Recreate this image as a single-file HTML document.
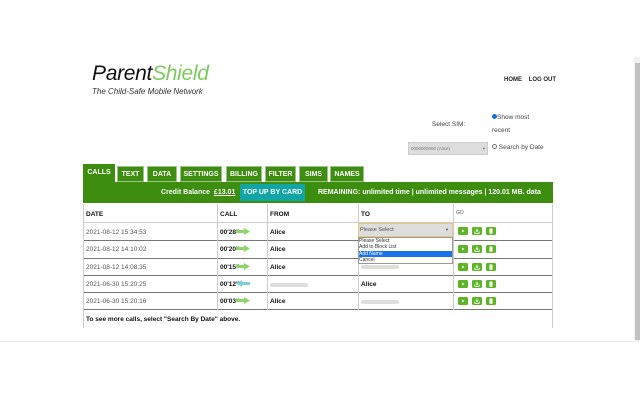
<!DOCTYPE html>
<html><head><meta charset="utf-8"><style>
*{margin:0;padding:0;box-sizing:border-box}
body{width:640px;height:400px;background:#fff;font-family:"Liberation Sans",sans-serif;position:relative;overflow:hidden;color:#222}
.a{position:absolute}
.tab{position:absolute;top:166px;height:16px;background:#3d8d0f;color:#fff;font-size:7px;font-weight:bold;text-align:center;line-height:15px;border:1px solid #9bc48a}
.bar{position:absolute;left:83px;top:182px;width:470px;height:21px;background:#3d8d0f}
.row{position:absolute;left:84px;width:468px;border-bottom:1px solid #777}
.vl{position:absolute;top:204px;height:124px;width:1px;background:#ccc}
.t{position:absolute;font-size:6.5px;color:#555}
.b{font-weight:bold;color:#111}
.btn{position:absolute;width:10px;height:8px;background:#5bb524;border-radius:1.5px}
.btn svg{position:absolute;left:2px;top:1px;width:6px;height:6px}
.arr{position:absolute;width:14px;height:7px}
.blur{position:absolute;height:4px;background:#ddd;border-radius:2px}
</style></head><body>
<div class="a" style="left:0;top:0;width:634px;height:342px;border-bottom:1px solid #eee"></div>
<div class="a" style="left:634px;top:57px;width:6px;height:285px;background:#f1f1f1"></div>
<div class="a" style="left:635px;top:63px;width:5px;height:277px;background:#c1c1c1"></div>
<div class="a" style="left:92px;top:62px;font-size:21px;font-style:italic;color:#111;letter-spacing:-0.3px">Parent<span style="color:#7ccc5c">Shield</span></div>
<div class="a" style="left:92px;top:87px;font-size:8px;font-style:italic;color:#333">The Child-Safe Mobile Network</div>
<div class="a" style="left:504px;top:77px;font-size:6px;font-weight:bold;color:#222">HOME &nbsp;&nbsp;&nbsp;LOG OUT</div>
<div class="a" style="left:432px;top:121px;font-size:6.5px;color:#444">Select SIM:</div>
<div class="a" style="left:492px;top:111px;font-size:6.5px;color:#444;line-height:13px;width:48px"><span style="display:inline-block;width:5px;height:5px;border-radius:50%;background:#1a6fe0"></span>Show most recent</div>
<div class="a" style="left:408px;top:142px;width:80px;height:13px;background:#ddd;border:1px solid #ccc;font-size:4.5px;color:#777;line-height:11px;padding-left:2px">0000000000 (Alice) <span style="float:right;margin-right:2px">▾</span></div>
<div class="a" style="left:492px;top:144px;font-size:6.5px;color:#444"><span style="display:inline-block;width:5px;height:5px;border-radius:50%;border:1px solid #777"></span> Search by Date</div>

<div class="tab" style="left:83px;width:32px;top:164px;height:20px;border:none;line-height:17px">CALLS</div>
<div class="tab" style="left:117px;width:27px">TEXT</div>
<div class="tab" style="left:147px;width:30px">DATA</div>
<div class="tab" style="left:180px;width:42px">SETTINGS</div>
<div class="tab" style="left:226px;width:36px">BILLING</div>
<div class="tab" style="left:265px;width:31px">FILTER</div>
<div class="tab" style="left:299px;width:29px">SIMS</div>
<div class="tab" style="left:330px;width:34px">NAMES</div>
<div class="bar"></div>
<div class="a" style="left:161px;top:189px;font-size:7px;font-weight:bold;color:#fff">Credit Balance &nbsp;<u>£13.01</u></div>
<div class="a" style="left:240px;top:184px;width:65px;height:17px;background:#12a5a5;color:#fff;font-size:7px;font-weight:bold;text-align:center;line-height:17px">TOP UP BY CARD</div>
<div class="a" style="left:318px;top:189px;font-size:7px;font-weight:bold;color:#fff">REMAINING: unlimited time | unlimited messages | 120.01 MB. data</div>

<div class="a" style="left:83px;top:204px;width:1px;height:124px;background:#ccc"></div>
<div class="a" style="left:552px;top:204px;width:1px;height:124px;background:#ccc"></div>
<div class="row" style="top:204px;height:19px;border-bottom-color:#ccc"></div>
<div class="row" style="top:223px;height:18px"></div>
<div class="row" style="top:241px;height:18px"></div>
<div class="row" style="top:259px;height:17px"></div>
<div class="row" style="top:276px;height:17px"></div>
<div class="row" style="top:293px;height:17px"></div>
<div class="vl" style="left:217px;height:106px"></div>
<div class="vl" style="left:267px;height:106px"></div>
<div class="vl" style="left:358px;height:106px"></div>
<div class="vl" style="left:453px;height:106px"></div>

<div class="t b" style="left:86px;top:211px">DATE</div>
<div class="t b" style="left:220px;top:211px">CALL</div>
<div class="t b" style="left:270px;top:211px">FROM</div>
<div class="t b" style="left:361px;top:211px">TO</div>
<div class="t" style="left:456px;top:210px;font-size:5px">GO</div>

<div class="t" style="left:86px;top:229px">2021-08-12 15:34:53</div>
<div class="t" style="left:86px;top:246px">2021-08-12 14:10:02</div>
<div class="t" style="left:86px;top:264px">2021-08-12 14:08:35</div>
<div class="t" style="left:86px;top:281px">2021-06-30 15:20:25</div>
<div class="t" style="left:86px;top:298px">2021-06-30 15:20:16</div>

<div class="t b" style="left:220px;top:229px">00'28"</div>
<div class="t b" style="left:220px;top:246px">00'20"</div>
<div class="t b" style="left:220px;top:264px">00'15"</div>
<div class="t b" style="left:220px;top:281px">00'12"</div>
<div class="t b" style="left:220px;top:298px">00'03"</div>
<svg class="arr" style="left:236px;top:228px" viewBox="0 0 14 7"><path d="M0 2h8V0l6 3.5L8 7V5H0z" fill="#8fd66a"/></svg>
<svg class="arr" style="left:236px;top:245px" viewBox="0 0 14 7"><path d="M0 2h8V0l6 3.5L8 7V5H0z" fill="#8fd66a"/></svg>
<svg class="arr" style="left:236px;top:263px" viewBox="0 0 14 7"><path d="M0 2h8V0l6 3.5L8 7V5H0z" fill="#8fd66a"/></svg>
<svg class="arr" style="left:236px;top:280px" viewBox="0 0 14 7"><path d="M14 2H6V0L0 3.5 6 7V5h8z" fill="#7ccfd6"/></svg>
<svg class="arr" style="left:236px;top:297px" viewBox="0 0 14 7"><path d="M0 2h8V0l6 3.5L8 7V5H0z" fill="#8fd66a"/></svg>

<div class="t b" style="left:270px;top:229px">Alice</div>
<div class="t b" style="left:270px;top:246px">Alice</div>
<div class="t b" style="left:270px;top:264px">Alice</div>
<div class="blur" style="left:270px;top:283px;width:38px"></div>
<div class="t b" style="left:270px;top:298px">Alice</div>

<div class="blur" style="left:361px;top:265px;width:38px"></div>
<div class="t b" style="left:361px;top:281px">Alice</div>
<div class="blur" style="left:361px;top:300px;width:38px"></div>

<div class="a" style="left:358px;top:223px;width:95px;height:14px;background:#ddd;border:1px solid #e8c97a;font-size:5.5px;color:#555;line-height:12px;padding-left:1px">Please Select<span style="float:right;margin-right:3px;font-size:4px">▼</span></div>
<div class="a" style="left:358px;top:237px;width:95px;height:27px;background:#fff;border:1px solid #999;font-size:5px;color:#333;line-height:6.4px">
<div>Please Select</div><div>Add to Block List</div><div style="background:#1a73e8;color:#fff">Add Name</div><div>Cancel</div></div>

<svg width="0" height="0" style="position:absolute"><defs>
<symbol id="p" viewBox="0 0 6 6"><path d="M2 1.5L4.5 3 2 4.5z" fill="#fff"/></symbol>
<symbol id="d" viewBox="0 0 6 6"><path d="M3 0.5v3M1.8 2.4L3 3.6 4.2 2.4M0.8 3.5v1.8h4.4V3.5" stroke="#fff" stroke-width="0.8" fill="none"/></symbol>
<symbol id="t" viewBox="0 0 6 6"><path d="M1.5 1h3M2.5 0.6h1M1.8 1.6h2.4v3.8H1.8z" stroke="#fff" stroke-width="0.7" fill="#fff"/></symbol>
</defs></svg>
<div class="btn" style="left:458px;top:227px"><svg><use href="#p"/></svg></div><div class="btn" style="left:472px;top:227px"><svg><use href="#d"/></svg></div><div class="btn" style="left:486px;top:227px"><svg><use href="#t"/></svg></div>
<div class="btn" style="left:458px;top:245px"><svg><use href="#p"/></svg></div><div class="btn" style="left:472px;top:245px"><svg><use href="#d"/></svg></div><div class="btn" style="left:486px;top:245px"><svg><use href="#t"/></svg></div>
<div class="btn" style="left:458px;top:263px"><svg><use href="#p"/></svg></div><div class="btn" style="left:472px;top:263px"><svg><use href="#d"/></svg></div><div class="btn" style="left:486px;top:263px"><svg><use href="#t"/></svg></div>
<div class="btn" style="left:458px;top:280px"><svg><use href="#p"/></svg></div><div class="btn" style="left:472px;top:280px"><svg><use href="#d"/></svg></div><div class="btn" style="left:486px;top:280px"><svg><use href="#t"/></svg></div>
<div class="btn" style="left:458px;top:297px"><svg><use href="#p"/></svg></div><div class="btn" style="left:472px;top:297px"><svg><use href="#d"/></svg></div><div class="btn" style="left:486px;top:297px"><svg><use href="#t"/></svg></div>

<div class="t b" style="left:86px;top:316px">To see more calls, select "Search By Date" above.</div>
</body></html>
